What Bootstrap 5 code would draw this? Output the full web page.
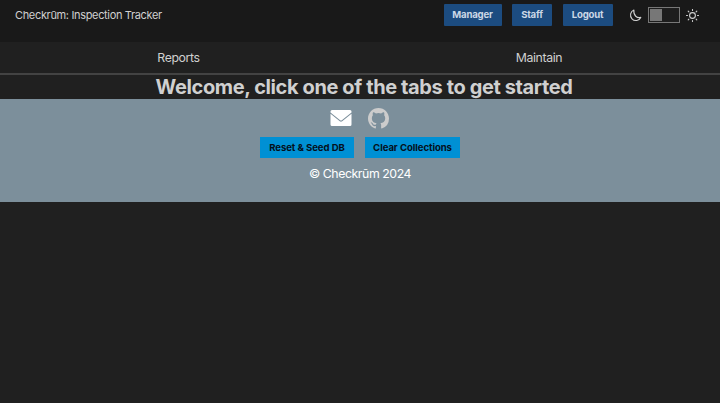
<!DOCTYPE html>
<html lang="en">
<head>
<meta charset="utf-8">
<meta name="viewport" content="width=device-width, initial-scale=1">
<title>Checkrūm: Inspection Tracker</title>
<link href="https://cdn.jsdelivr.net/npm/bootstrap@5.3.0/dist/css/bootstrap.min.css" rel="stylesheet">
<style>
body { font-family: Inter, "Liberation Sans", sans-serif; background: #202020; color: #d0d0d0; min-height: 403px; }
.topbar { background: #191919; height: 42px; padding: 4px 21px 0 15px; }
.brand-title { font-size: 11px; line-height: 23px; letter-spacing: -.34px; color: #d0d0d0; }
.btn-top, .btn-db { font-size: 9.6px; font-weight: 700; line-height: 22px; height: 22px; padding: 0; border: 0; border-radius: 1px; letter-spacing: -.08px; }
.btn-top { background: #1c4c80; color: #cbd8e6; letter-spacing: -.2px; }
.w-manager { width: 58px; } .w-staff { width: 40px; } .w-logout { width: 50px; }
.top-actions { gap: 10.5px; }
.theme-switch { margin-left: 6px; gap: 6px; height: 22px; }
.switch-track { width: 32px; height: 16px; border: 1px solid #777; padding: 1px; background: #1d1d1d; }
.switch-thumb { width: 12px; height: 12px; background: #777; }
.tabs-bar { height: 33px; border-bottom: 2px solid #434343; }
.tabs-bar .nav-link { padding: 0; font-size: 12.3px; letter-spacing: -.37px; line-height: 32px; color: #d0d0d0; }
.tabs-bar .nav-link:first-child { padding-right: 3px; }
.tabs-bar .nav-link:last-child { padding-right: 2px; }
.welcome { font-size: 20px; font-weight: 700; line-height: 24px; height: 24px; padding-left: 8px; letter-spacing: -.39px; }
.site-footer { background: #7c8f9b; height: 103px; padding-top: 8px; }
.footer-icons { gap: 16px; height: 22px; padding-right: 2px; }
.db-actions { gap: 11px; margin-top: 8px; }
.btn-db { background: #0090d4; color: #05101c; border-radius: 0; height: 21px; }
.w-reset { width: 94px; } .w-clear { width: 95px; }
.copyright { font-size: 12.3px; letter-spacing: -.43px; line-height: 18px; margin-top: 7px; color: #fff; }
</style>
<script src="https://cdn.jsdelivr.net/npm/bootstrap@5.3.0/dist/js/bootstrap.bundle.min.js"></script>
</head>
<body>
<header class="topbar d-flex justify-content-between align-items-start">
  <span class="brand-title">Checkrūm: Inspection Tracker</span>
  <div class="top-actions d-flex">
    <button class="btn btn-top w-manager">Manager</button>
    <button class="btn btn-top w-staff">Staff</button>
    <button class="btn btn-top w-logout">Logout</button>
    <div class="theme-switch d-flex align-items-center">
      <svg width="13" height="13" viewBox="0 0 13 13" fill="none" stroke="#d0d0d0" stroke-width="1.1" stroke-linejoin="round"><path d="M4.9 1.1A5.4 5.4 0 1 0 11.8 8.4C8.2 9.5 4.2 6.6 4.9 1.1Z"/></svg>
      <div class="switch-track"><div class="switch-thumb"></div></div>
      <svg width="13" height="13" viewBox="0 0 13 13" fill="none" stroke="#d0d0d0" stroke-width="1.1" stroke-linecap="round"><circle cx="6.5" cy="6.5" r="2.9"/><path d="M6.5.5v1M6.5 11.5v1M.5 6.5h1M11.5 6.5h1M2.2 2.2l.7.7M10.1 10.1l.7.7M2.2 10.8l.7-.7M10.1 2.9l.7-.7"/></svg>
    </div>
  </div>
</header>
<nav class="tabs-bar nav nav-fill flex-nowrap">
  <a class="nav-link col-6" href="#">Reports</a>
  <a class="nav-link col-6" href="#">Maintain</a>
</nav>
<h1 class="welcome text-center text-nowrap m-0">Welcome, click one of the tabs to get started</h1>
<footer class="site-footer text-center">
  <div class="footer-icons d-flex justify-content-center align-items-center">
    <svg width="22" height="22" viewBox="0 0 22 22" fill="#fff"><path d="M2 3h18a1.5 1.5 0 0 1 1.5 1.5v.9L11.8 13.2a1.3 1.3 0 0 1-1.6 0L.5 5.4v-.9A1.5 1.5 0 0 1 2 3Z"/><path d="M.5 6.8 9.8 14.2a1.9 1.9 0 0 0 2.4 0l9.3-7.4v10.7A1.5 1.5 0 0 1 20 19H2a1.5 1.5 0 0 1-1.5-1.5Z"/></svg>
    <svg width="21" height="21" viewBox="0 0 16 16" fill="#ccc"><path d="M8 0C3.58 0 0 3.58 0 8c0 3.54 2.29 6.53 5.47 7.59.4.07.55-.17.55-.38 0-.19-.01-.82-.01-1.49-2.01.37-2.53-.49-2.69-.94-.09-.23-.48-.94-.82-1.13-.28-.15-.68-.52-.01-.53.63-.01 1.08.58 1.23.82.72 1.21 1.87.87 2.33.66.07-.52.28-.87.51-1.07-1.78-.2-3.64-.89-3.64-3.95 0-.87.31-1.59.82-2.15-.08-.2-.36-1.02.08-2.12 0 0 .67-.21 2.2.82a7.6 7.6 0 0 1 4 0c1.53-1.04 2.2-.82 2.2-.82.44 1.1.16 1.92.08 2.12.51.56.82 1.27.82 2.15 0 3.07-1.87 3.75-3.65 3.95.29.25.54.73.54 1.48 0 1.07-.01 1.93-.01 2.2 0 .21.15.46.55.38A8.01 8.01 0 0 0 16 8c0-4.42-3.58-8-8-8Z"/></svg>
  </div>
  <div class="db-actions d-flex justify-content-center">
    <button class="btn btn-db w-reset">Reset &amp; Seed DB</button>
    <button class="btn btn-db w-clear">Clear Collections</button>
  </div>
  <p class="copyright mb-0">© Checkrūm 2024</p>
</footer>
</body>
</html>
